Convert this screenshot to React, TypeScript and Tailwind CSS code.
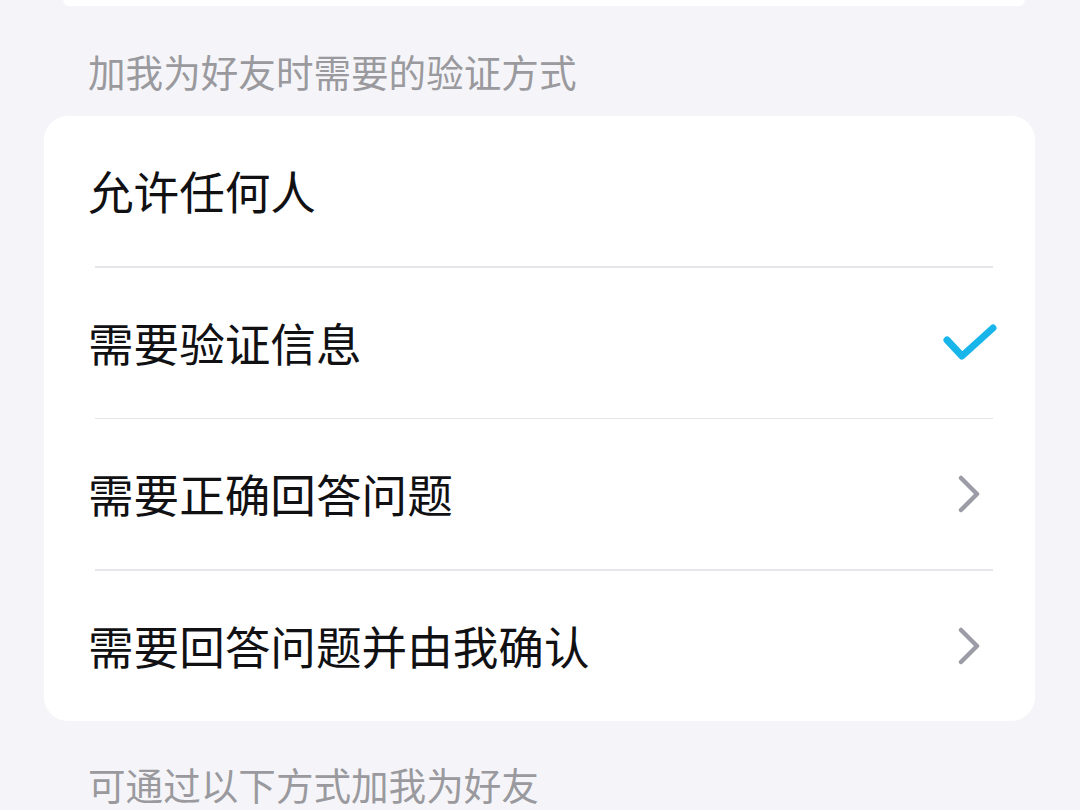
import React from "react";

const options = [
    { label: "允许任何人", right: "none" },
    { label: "需要验证信息", right: "check" },
    { label: "需要正确回答问题", right: "arrow" },
    { label: "需要回答问题并由我确认", right: "arrow" },
];

const CheckMark = () => (
    <svg width="54" height="40" viewBox="0 0 54 40" fill="none">
        <path d="M4 16 L19 32 L50 4" stroke="#17b5ea" strokeWidth="7" strokeLinecap="round" strokeLinejoin="round" />
    </svg>
);

const Chevron = () => (
    <svg width="24" height="38" viewBox="0 0 24 38" fill="none">
        <path d="M4 3 L20 19 L4 35" stroke="#9c9ca6" strokeWidth="4.5" strokeLinecap="round" strokeLinejoin="round" />
    </svg>
);

export default function App() {
    return (
        <div
            className="w-[1080px] h-[810px] overflow-hidden bg-[#f5f5f9]"
            style={{ fontFamily: '"Noto Sans CJK SC", "Noto Sans", sans-serif' }}
        >
            <div className="ml-[63px] mr-[55px] h-[6px] bg-white rounded-b-[6px]" />

            <div className="pl-[88px] pt-[45px] pb-[25px] text-[37.6px] leading-[40px] text-[#9a9a9e]">
                加我为好友时需要的验证方式
            </div>

            <div className="ml-[44px] mr-[45px] bg-white rounded-[24px]">
                {options.map((opt, i) => (
                    <div key={opt.label}>
                        {i > 0 && <div className="ml-[51px] mr-[42px] h-[1.5px] bg-[#e6e6ea]" />}
                        <div className="h-[150px] flex items-center justify-between pl-[44px]">
                            <span className="text-[45.6px] leading-none text-[#111114]">{opt.label}</span>
                            {opt.right === "check" && (
                                <div className="mr-[38px] mt-[2px]">
                                    <CheckMark />
                                </div>
                            )}
                            {opt.right === "arrow" && (
                                <div className="mr-[54px]">
                                    <Chevron />
                                </div>
                            )}
                        </div>
                    </div>
                ))}
            </div>

            <div className="pl-[88px] pt-[43px] text-[37.6px] leading-[40px] text-[#9a9a9e]">
                可通过以下方式加我为好友
            </div>
        </div>
    );
}
